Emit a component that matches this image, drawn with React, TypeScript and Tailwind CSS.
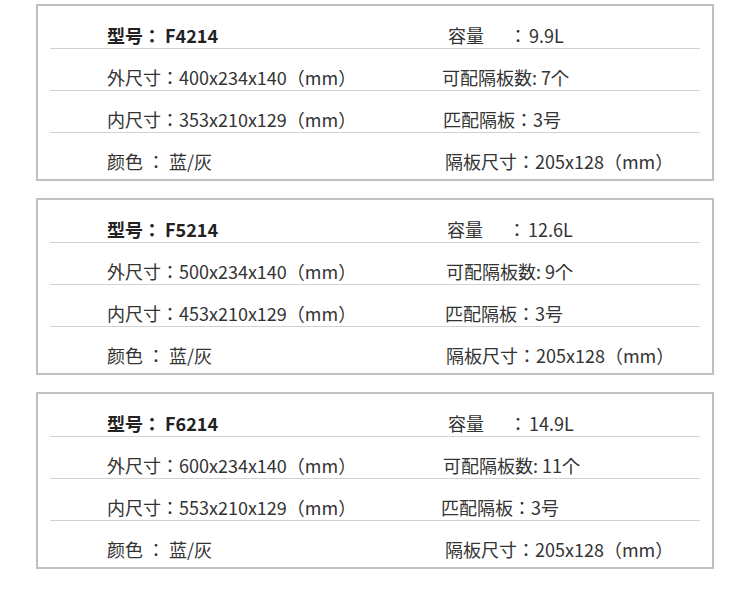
type Cell = { text: React.ReactNode; pad: string };

interface Spec {
  model: string;
  volume: string;
  outer: string;
  inner: string;
  count: string;
  pads: [string, string, string, string];
}

const specs: Spec[] = [
  { model: "F4214", volume: "9.9L", outer: "400x234x140", inner: "353x210x129", count: "7个", pads: ["pl-[7px]", "pl-[1px]", "pl-[2px]", "pl-[4px]"] },
  { model: "F5214", volume: "12.6L", outer: "500x234x140", inner: "453x210x129", count: "9个", pads: ["pl-[6px]", "pl-[5px]", "pl-[4px]", "pl-[5px]"] },
  { model: "F6214", volume: "14.9L", outer: "600x234x140", inner: "553x210x129", count: "11个", pads: ["pl-[7px]", "pl-[2px]", "pl-0", "pl-[4px]"] },
];

function Row({ left, right, last }: { left: React.ReactNode; right: Cell; last?: boolean }) {
  return (
    <div
      className={`grid grid-cols-[391px_1fr] pt-[17px] leading-[22px] ${
        last ? "h-[46px]" : "h-[42px] border-b border-[#d2d2d2]"
      }`}
    >
      <div className="pl-[57px] whitespace-pre">{left}</div>
      <div className={`whitespace-pre ${right.pad}`}>{right.text}</div>
    </div>
  );
}

function SpecCard({ s }: { s: Spec }) {
  return (
    <div className="w-[678px] h-[177px] mx-auto border-2 border-[#c0c0c0] px-[12px] pt-[1px]">
      <Row
        left={<span className="font-bold text-[#222]">{"型号： " + s.model}</span>}
        right={{
          pad: s.pads[0],
          text: (
            <>
              容量<span className="ml-[25px]">：</span>
              <span className="ml-[2px]">{s.volume}</span>
            </>
          ),
        }}
      />
      <Row left={`外尺寸：${s.outer}（mm）`} right={{ pad: s.pads[1], text: `可配隔板数: ${s.count}` }} />
      <Row left={`内尺寸：${s.inner}（mm）`} right={{ pad: s.pads[2], text: "匹配隔板：3号" }} />
      <Row last left="颜色 ： 蓝/灰" right={{ pad: s.pads[3], text: "隔板尺寸：205x128（mm）" }} />
    </div>
  );
}

export default function App() {
  return (
    <div
      className="w-[750px] h-[608px] bg-white pt-[4px] flex flex-col gap-[17px] text-[18px] text-[#333]"
      style={{ fontFamily: '"Noto Sans CJK JP", "Noto Sans CJK SC", sans-serif' }}
    >
      {specs.map((s) => (
        <SpecCard key={s.model} s={s} />
      ))}
    </div>
  );
}
